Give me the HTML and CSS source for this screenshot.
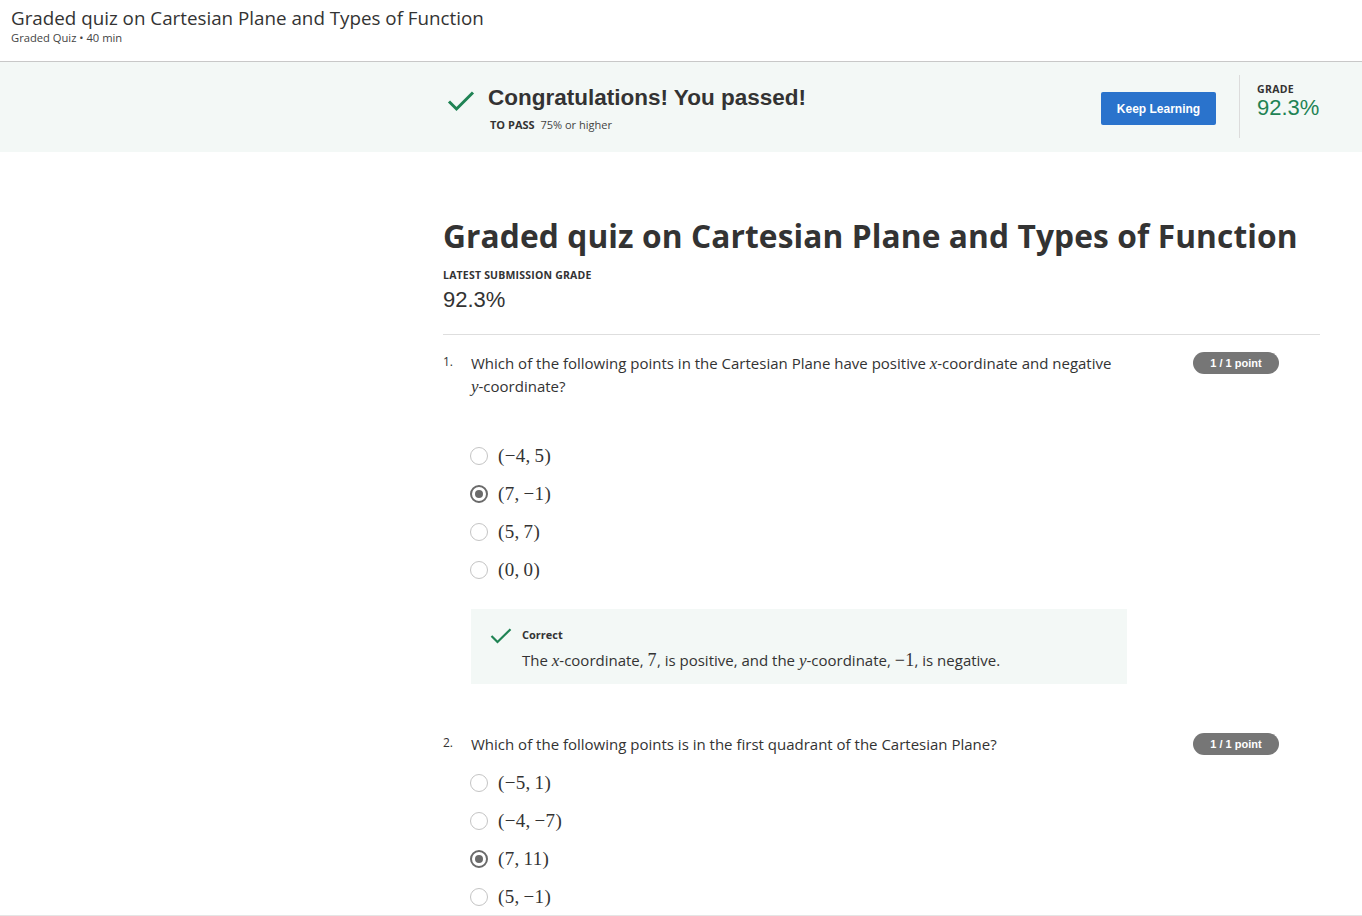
FILE: index.html
```html
<!DOCTYPE html>
<html lang="en">
<head>
<meta charset="utf-8">
<title>Graded quiz on Cartesian Plane and Types of Function</title>
<link rel="stylesheet" href="styles.css">
</head>
<body>
<header class="topbar">
  <div class="topbar-title">Graded quiz on Cartesian Plane and Types of Function</div>
  <div class="topbar-sub">Graded Quiz • 40 min</div>
</header>

<section class="banner">
  <div class="banner-inner">
    <div class="banner-left">
      <svg class="banner-check" width="28" height="22" viewBox="0 0 28 22"><path d="M2 11.5 L9.5 19 L26 2.5" fill="none" stroke="#1f8354" stroke-width="3"/></svg>
      <div>
        <div class="banner-title">Congratulations! You passed!</div>
        <div class="banner-pass"><b>TO PASS</b> 75% or higher</div>
      </div>
    </div>
    <div class="banner-right">
      <button class="btn-keep">Keep Learning</button>
      <div class="banner-grade">
        <div class="grade-label">GRADE</div>
        <div class="grade-value">92.3%</div>
      </div>
    </div>
  </div>
</section>

<main class="content">
  <h1 class="quiz-title">Graded quiz on Cartesian Plane and Types of Function</h1>
  <div class="latest-label">LATEST SUBMISSION GRADE</div>
  <div class="latest-value">92.3%</div>
  <hr class="sep">

  <div class="question q1">
    <div class="q-head">
      <span class="q-num">1.</span>
      <div class="q-text">Which of the following points in the Cartesian Plane have positive <span class="nw"><i class="mi">x</i>-coordinate</span> and negative <span class="nw"><i class="mi">y</i>-coordinate?</span></div>
      <span class="badge">1 / 1 point</span>
    </div>
    <ul class="options spaced">
      <li><span class="radio"></span><span class="math">(−4,&#8201;5)</span></li>
      <li><span class="radio checked"></span><span class="math">(7,&#8201;−1)</span></li>
      <li><span class="radio"></span><span class="math">(5,&#8201;7)</span></li>
      <li><span class="radio"></span><span class="math">(0,&#8201;0)</span></li>
    </ul>
    <div class="feedback">
      <svg class="fb-check" width="22" height="16" viewBox="0 0 22 16"><path d="M1.5 8 L7.5 14 L20.5 1.2" fill="none" stroke="#1f8354" stroke-width="2.2"/></svg>
      <div>
        <div class="fb-title">Correct</div>
        <div class="fb-text">The <i class="mi">x</i>-coordinate, <span class="math">7</span>, is positive, and the <i class="mi">y</i>-coordinate, <span class="math">−1</span>, is negative.</div>
      </div>
    </div>
  </div>

  <div class="question q2">
    <div class="q-head">
      <span class="q-num">2.</span>
      <div class="q-text">Which of the following points is in the first quadrant of the Cartesian Plane?</div>
      <span class="badge">1 / 1 point</span>
    </div>
    <ul class="options">
      <li><span class="radio"></span><span class="math">(−5,&#8201;1)</span></li>
      <li><span class="radio"></span><span class="math">(−4,&#8201;−7)</span></li>
      <li><span class="radio checked"></span><span class="math">(7,&#8201;11)</span></li>
      <li><span class="radio"></span><span class="math">(5,&#8201;−1)</span></li>
    </ul>
  </div>
</main>
</body>
</html>
```

FILE: styles.css
```css
* { box-sizing: border-box; }
html, body { margin: 0; padding: 0; }
body {
  font-family: "Open Sans", "Liberation Sans", sans-serif;
  color: #333;
  background: #fff;
  height: 916px;
  overflow: hidden;
  border-bottom: 1px solid #e5e5e5;
}

.topbar {
  height: 62px;
  padding: 6px 11px 0;
  border-bottom: 1px solid #c8c8c8;
}
.topbar-title {
  font-size: 18.8px;
  line-height: 24px;
  color: #333;
}
.topbar-sub {
  font-size: 11.2px;
  line-height: 14px;
  color: #444;
  margin-top: 1px;
}

.banner {
  background: #f3f8f6;
  height: 90px;
}
.banner-inner {
  margin-left: 443px;
  width: 877px;
  height: 100%;
  display: flex;
  justify-content: space-between;
}
.banner-left {
  display: flex;
  align-items: flex-start;
  padding-top: 22px;
  padding-left: 4px;
  gap: 13px;
}
.banner-check { margin-top: 6px; }
.banner-title {
  font-family: "Liberation Sans", Arial, sans-serif;
  font-weight: bold;
  font-size: 22.5px;
  line-height: 28px;
  color: #333;
}
.banner-pass {
  font-size: 11px;
  margin-top: 5px;
  margin-left: 2px;
  color: #444;
}
.banner-pass b { color: #333; margin-right: 3px; }
.banner-right {
  display: flex;
  align-items: flex-start;
}
.btn-keep {
  font-family: "Liberation Sans", Arial, sans-serif;
  font-weight: bold;
  font-size: 12px;
  color: #fff;
  background: #2a73cc;
  border: none;
  border-radius: 2px;
  width: 115px;
  height: 33px;
  padding: 0;
  margin-top: 30px;
  margin-right: 23px;
}
.banner-grade {
  border-left: 1px solid #dcdcdc;
  height: 63px;
  margin-top: 13px;
  padding-left: 17px;
  padding-top: 7px;
  width: 81px;
}
.grade-label {
  font-size: 10.5px;
  font-weight: bold;
  letter-spacing: 0.3px;
  line-height: 14px;
  color: #333;
}
.grade-value {
  font-family: "Liberation Sans", Arial, sans-serif;
  font-size: 22px;
  line-height: 24px;
  color: #1f8354;
}

.content {
  margin-left: 443px;
  width: 877px;
  padding-top: 62px;
}
.quiz-title {
  font-size: 31.7px;
  font-weight: bold;
  line-height: 44px;
  margin: 0;
  color: #333;
  letter-spacing: 0.1px;
}
.latest-label {
  margin-top: 10px;
  font-size: 10.5px;
  font-weight: bold;
  line-height: 14px;
  letter-spacing: 0.2px;
  color: #333;
}
.latest-value {
  font-family: "Liberation Sans", Arial, sans-serif;
  font-size: 22px;
  line-height: 26px;
  margin-top: 5px;
  color: #333;
}
.sep {
  border: none;
  border-top: 1px solid #dedede;
  margin: 21px 0 0;
}

.question { padding-top: 17px; }
.q2 { padding-top: 49px; }
.q-head {
  display: flex;
  align-items: flex-start;
}
.q-num {
  width: 28px;
  font-size: 12px;
  line-height: 20px;
  color: #333;
}
.q-text {
  width: 680px;
  font-size: 15px;
  line-height: 23px;
  color: #333;
}
.nw { white-space: nowrap; }
.badge {
  margin-left: auto;
  margin-right: 41px;
  margin-top: 0;
  background: #767676;
  color: #fff;
  font-family: "Liberation Sans", Arial, sans-serif;
  font-weight: bold;
  font-size: 11px;
  height: 22px;
  line-height: 22px;
  width: 86px;
  text-align: center;
  border-radius: 11px;
}
.mi {
  font-family: "Liberation Serif", "DejaVu Serif", serif;
  font-style: italic;
  font-size: 17px;
}
.math {
  font-family: "Liberation Serif", "DejaVu Serif", serif;
  font-size: 19px;
  letter-spacing: 0.3px;
}

.options {
  list-style: none;
  margin: 0;
  padding: 0 0 0 27px;
}
.options.spaced { margin-top: 39px; }
.q2 .options { margin-top: 8px; }
.options li {
  display: flex;
  align-items: center;
  height: 38px;
  gap: 10px;
}
.radio {
  width: 18px;
  height: 18px;
  border-radius: 50%;
  border: 1.5px solid #c4c4c4;
  display: inline-block;
  position: relative;
  flex: none;
}
.radio.checked {
  border: 2px solid #6a6a6a;
}
.radio.checked::after {
  content: "";
  position: absolute;
  left: 3px; top: 3px;
  width: 8px; height: 8px;
  border-radius: 50%;
  background: #6a6a6a;
}

.feedback {
  margin: 20px 0 0 28px;
  width: 656px;
  height: 75px;
  background: #f3f8f6;
  display: flex;
  align-items: flex-start;
  padding: 18px 0 0 19px;
  gap: 11px;
}
.fb-check { margin-top: 1px; }
.fb-title {
  font-size: 11px;
  font-weight: bold;
  line-height: 16px;
  color: #333;
  margin-left: -1px;
}
.fb-text {
  font-size: 15px;
  line-height: 24px;
  margin-top: 5px;
  margin-left: -1px;
  color: #333;
}
.fb-text .math { font-size: 18px; }
```
